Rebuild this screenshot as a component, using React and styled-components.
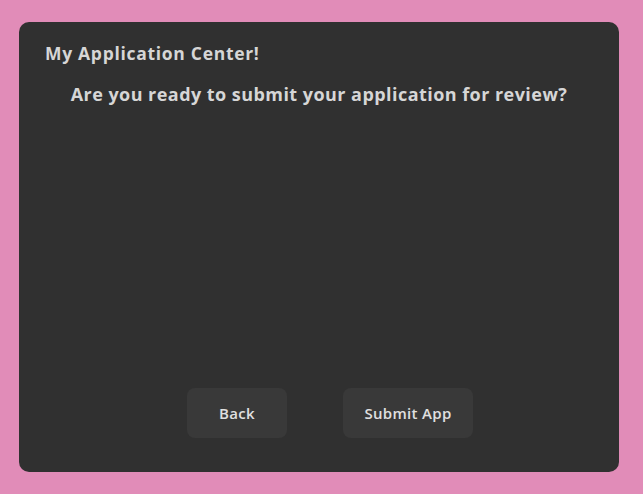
import React from "react";
import styled, { createGlobalStyle } from "styled-components";

const Global = createGlobalStyle`
  html, body { margin: 0; padding: 0; background: #e18cb8; }
  body { font-family: "Open Sans", "Liberation Sans", sans-serif; }
`;

const Page = styled.div`
  width: 643px;
  height: 494px;
  padding: 22px 24px 22px 19px;
  box-sizing: border-box;
`;

const Panel = styled.div`
  width: 600px;
  height: 450px;
  background: #303030;
  border-radius: 10px;
  box-sizing: border-box;
  display: flex;
  flex-direction: column;
  padding: 21px 0 34px 0;
`;

const Title = styled.div`
  font-weight: 700;
  font-size: 17.5px;
  line-height: 20px;
  color: #d6d6d6;
  padding-left: 26px;
  letter-spacing: 0.7px;
`;

const Question = styled.div`
  font-weight: 700;
  font-size: 18px;
  line-height: 22px;
  color: #d6d6d6;
  text-align: center;
  margin-top: 20px;
  letter-spacing: 0.45px;
`;

const Actions = styled.div`
  margin-top: auto;
  display: flex;
  justify-content: center;
  gap: 56px;
  padding-left: 22px;
`;

const Button = styled.button`
  width: ${(p) => p.$w}px;
  height: 50px;
  border: none;
  border-radius: 8px;
  background: #393939;
  color: #e0e0e0;
  font-family: inherit;
  font-weight: 600;
  font-size: 15px;
  letter-spacing: 0.3px;
  cursor: pointer;
`;

export default function App() {
  return (
    <>
      <Global />
      <Page>
        <Panel>
          <Title>My Application Center!</Title>
          <Question>Are you ready to submit your application for review?</Question>
          <Actions>
            <Button $w={100}>Back</Button>
            <Button $w={130}>Submit App</Button>
          </Actions>
        </Panel>
      </Page>
    </>
  );
}
